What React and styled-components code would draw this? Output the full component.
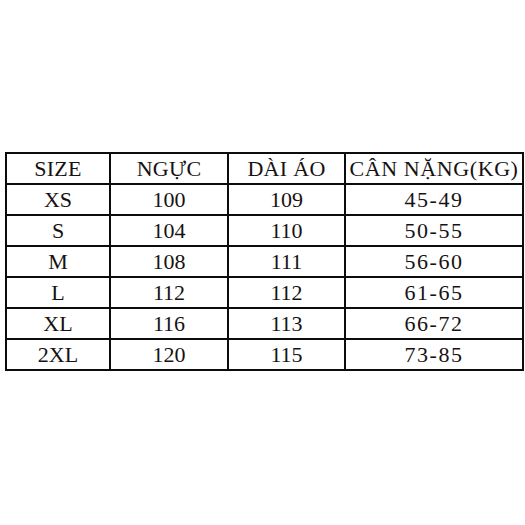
import React from "react";
import styled, { createGlobalStyle } from "styled-components";

const Global = createGlobalStyle`
  html, body { margin: 0; padding: 0; background: #fff; }
  body { font-family: "Liberation Serif", "Times New Roman", serif; }
`;

const Page = styled.div`
  width: 525px;
  height: 525px;
  background: #fff;
  padding: 152px 0 0 5px;
  box-sizing: border-box;
`;

const Table = styled.table`
  border-collapse: collapse;
  width: 517px;
  table-layout: fixed;
  color: #171212;
`;

const Cell = styled.td`
  font-family: "Liberation Serif", "Times New Roman", serif;
  font-size: 22px;
  font-weight: normal;
  border: 2px solid #0c0c0c;
  height: 29px;
  padding: 0;
  text-align: center;
  vertical-align: middle;
  line-height: 29px;
  white-space: nowrap;
  letter-spacing: ${(p) => (p.$wide ? "1.5px" : "0")};
`;

const Head = styled(Cell).attrs({ as: "th" })`
  letter-spacing: ${(p) => (p.$wide ? "0.6px" : "0.3px")};
`;

const cols = [104, 118, 117, 178];
const headers = ["SIZE", "NGỰC", "DÀI ÁO", "CÂN NẶNG(KG)"];
const rows = [
  ["XS", "100", "109", "45-49"],
  ["S", "104", "110", "50-55"],
  ["M", "108", "111", "56-60"],
  ["L", "112", "112", "61-65"],
  ["XL", "116", "113", "66-72"],
  ["2XL", "120", "115", "73-85"],
];

export default function App() {
  return (
    <Page>
      <Global />
      <Table>
        <colgroup>
          {cols.map((w, i) => (
            <col key={i} style={{ width: w }} />
          ))}
        </colgroup>
        <thead>
          <tr>
            {headers.map((h, i) => (
              <Head key={h} $wide={i === 3}>{h}</Head>
            ))}
          </tr>
        </thead>
        <tbody>
          {rows.map((r) => (
            <tr key={r[0]}>
              {r.map((c, i) => (
                <Cell key={i} $wide={i === 3}>{c}</Cell>
              ))}
            </tr>
          ))}
        </tbody>
      </Table>
    </Page>
  );
}
